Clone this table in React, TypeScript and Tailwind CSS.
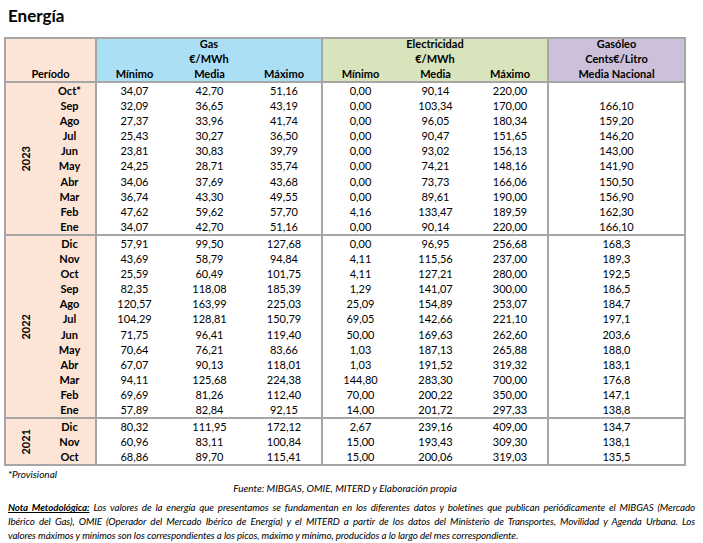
type Row = [string, string[], string[], string];

const grupos: { anio: string; filas: Row[] }[] = [
  {
    anio: "2023",
    filas: [
      ["Oct*", ["34,07", "42,70", "51,16"], ["0,00", "90,14", "220,00"], ""],
      ["Sep", ["32,09", "36,65", "43,19"], ["0,00", "103,34", "170,00"], "166,10"],
      ["Ago", ["27,37", "33,96", "41,74"], ["0,00", "96,05", "180,34"], "159,20"],
      ["Jul", ["25,43", "30,27", "36,50"], ["0,00", "90,47", "151,65"], "146,20"],
      ["Jun", ["23,81", "30,83", "39,79"], ["0,00", "93,02", "156,13"], "143,00"],
      ["May", ["24,25", "28,71", "35,74"], ["0,00", "74,21", "148,16"], "141,90"],
      ["Abr", ["34,06", "37,69", "43,68"], ["0,00", "73,73", "166,06"], "150,50"],
      ["Mar", ["36,74", "43,30", "49,55"], ["0,00", "89,61", "190,00"], "156,90"],
      ["Feb", ["47,62", "59,62", "57,70"], ["4,16", "133,47", "189,59"], "162,30"],
      ["Ene", ["34,07", "42,70", "51,16"], ["0,00", "90,14", "220,00"], "166,10"],
    ],
  },
  {
    anio: "2022",
    filas: [
      ["Dic", ["57,91", "99,50", "127,68"], ["0,00", "96,95", "256,68"], "168,3"],
      ["Nov", ["43,69", "58,79", "94,84"], ["4,11", "115,56", "237,00"], "189,3"],
      ["Oct", ["25,59", "60,49", "101,75"], ["4,11", "127,21", "280,00"], "192,5"],
      ["Sep", ["82,35", "118,08", "185,39"], ["1,29", "141,07", "300,00"], "186,5"],
      ["Ago", ["120,57", "163,99", "225,03"], ["25,09", "154,89", "253,07"], "184,7"],
      ["Jul", ["104,29", "128,81", "150,79"], ["69,05", "142,66", "221,10"], "197,1"],
      ["Jun", ["71,75", "96,41", "119,40"], ["50,00", "169,63", "262,60"], "203,6"],
      ["May", ["70,64", "76,21", "83,66"], ["1,03", "187,13", "265,88"], "188,0"],
      ["Abr", ["67,07", "90,13", "118,01"], ["1,03", "191,52", "319,32"], "183,1"],
      ["Mar", ["94,11", "125,68", "224,38"], ["144,80", "283,30", "700,00"], "176,8"],
      ["Feb", ["69,69", "81,26", "112,40"], ["70,00", "200,22", "350,00"], "147,1"],
      ["Ene", ["57,89", "82,84", "92,15"], ["14,00", "201,72", "297,33"], "138,8"],
    ],
  },
  {
    anio: "2021",
    filas: [
      ["Dic", ["80,32", "111,95", "172,12"], ["2,67", "239,16", "409,00"], "134,7"],
      ["Nov", ["60,96", "83,11", "100,84"], ["15,00", "193,43", "309,30"], "138,1"],
      ["Oct", ["68,86", "89,70", "115,41"], ["15,00", "200,06", "319,03"], "135,5"],
    ],
  },
];

// tres subcolumnas de 75/75/74
function Tres({ v, className = "" }: { v: string[]; className?: string }) {
  return (
    <div className={`flex ${className}`}>
      <div className="w-[75px] text-center">{v[0]}</div>
      <div className="w-[75px] text-center">{v[1]}</div>
      <div className="w-[74px] text-center">{v[2]}</div>
    </div>
  );
}

export default function App() {
  return (
    <div className="min-h-[543px] bg-white pt-[4px] text-black font-['Lato',sans-serif]">
      <h1 className="pl-2 text-[17px] font-bold leading-[24px] h-[24px] mb-[9px]">Energía</h1>

      <div className="ml-[4px] w-[682px] border-2 border-[#a6a6a6] text-[11px] leading-[15px]">
        {/* cabecera */}
        <div className="flex h-[44px] font-bold border-b-2 border-[#a6a6a6]">
          <div className="w-[89px] bg-[#fce4d6] flex items-end justify-center">Período</div>
          <div className="w-[226px] border-l-2 border-[#a6a6a6] bg-[#abdff5] flex flex-col justify-end">
            <div className="text-center">Gas</div>
            <div className="text-center">€/MWh</div>
            <Tres v={["Mínimo", "Media", "Máximo"]} />
          </div>
          <div className="w-[226px] border-l-2 border-[#a6a6a6] bg-[#d8e4bc] flex flex-col justify-end">
            <div className="text-center">Electricidad</div>
            <div className="text-center">€/MWh</div>
            <Tres v={["Mínimo", "Media", "Máximo"]} />
          </div>
          <div className="flex-1 border-l-2 border-[#a6a6a6] bg-[#ccc0da] flex flex-col justify-end text-center">
            <div>Gasóleo</div>
            <div>Cents€/Litro</div>
            <div>Media Nacional</div>
          </div>
        </div>

        {grupos.map((g, gi) => (
          <div key={g.anio} className={`flex ${gi > 0 ? "border-t-2 border-[#a6a6a6]" : ""}`}>
            <div className="w-[38px] bg-[#fce4d6] flex items-center justify-center">
              <span className="font-bold [writing-mode:vertical-rl] rotate-180">{g.anio}</span>
            </div>
            <div className="flex-1">
              {g.filas.map(([mes, gas, elec, gasoleo], i) => (
                <div key={i} className="flex h-[15.1px]">
                  <div className="w-[51px] bg-[#fce4d6] text-center font-bold">{mes}</div>
                  <Tres v={gas} className="w-[226px] border-l-2 border-[#a6a6a6]" />
                  <Tres v={elec} className="w-[226px] border-l-2 border-[#a6a6a6]" />
                  <div className="flex-1 border-l-2 border-[#a6a6a6] text-center">{gasoleo}</div>
                </div>
              ))}
            </div>
          </div>
        ))}
      </div>

      <div className="mt-[1px] pl-2 italic text-[10px] leading-[14px]">*Provisional</div>
      <div className="w-[690px] text-center italic text-[10px] leading-[14px]">
        Fuente: MIBGAS, OMIE, MITERD y Elaboración propia
      </div>

      <div className="mt-[5px] px-2 italic text-[9.8px] leading-[14px] tracking-[-0.1px]">
        <div className="text-justify [text-align-last:justify] whitespace-nowrap">
          <span className="font-bold underline">Nota Metodológica:</span> Los valores de la energía que presentamos se fundamentan en los diferentes datos y boletines que publican periódicamente el MIBGAS (Mercado
        </div>
        <div className="text-justify [text-align-last:justify] whitespace-nowrap">
          Ibérico del Gas), OMIE (Operador del Mercado Ibérico de Energía) y el MITERD a partir de los datos del Ministerio de Transportes, Movilidad y Agenda Urbana. Los
        </div>
        <div>
          valores máximos y mínimos son los correspondientes a los picos, máximo y mínimo, producidos a lo largo del mes correspondiente.
        </div>
      </div>
    </div>
  );
}
